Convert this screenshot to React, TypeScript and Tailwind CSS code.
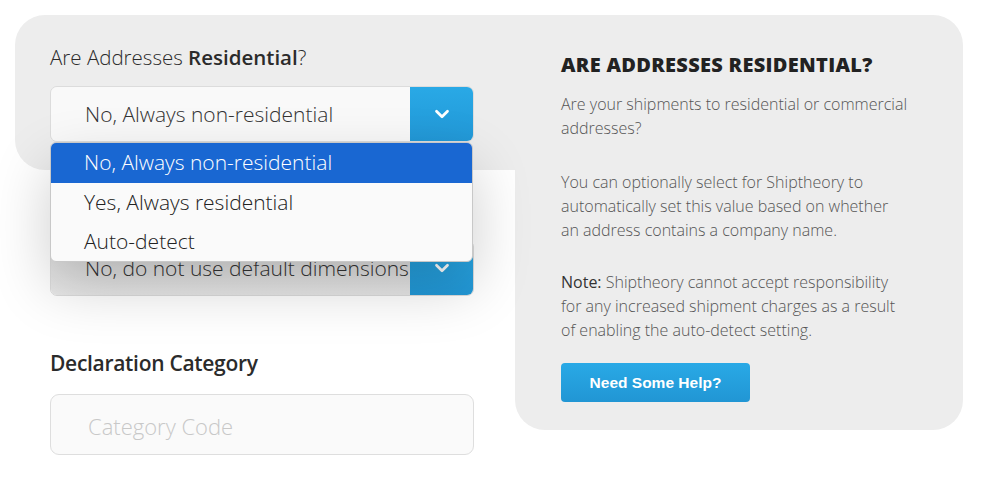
import { ChevronDown } from "lucide-react";

const light = "font-['Open_Sans',sans-serif] font-light";

function SelectBox({ value, dim }: { value: string; dim?: boolean }) {
  return (
    <div className="flex h-[56px] w-[424px] overflow-hidden rounded-[7px] border border-[#dcdcdc]">
      <div
        className={`flex flex-1 items-center whitespace-nowrap pl-[34px] pt-[2px] text-[21px] text-[#333] ${light} ${dim ? "bg-gradient-to-b from-[#dcdcdc] to-[#e8e8e8]" : "bg-[#f9f9f9]"}`}
      >
        {value}
      </div>
      <div className="flex w-[63px] shrink-0 items-center justify-center bg-gradient-to-b from-[#29a9e6] to-[#2298d7]">
        <ChevronDown className="h-[22px] w-[22px] text-white" strokeWidth={3} />
      </div>
    </div>
  );
}

function Dropdown() {
  const opts = ["No, Always non-residential", "Yes, Always residential", "Auto-detect"];
  return (
    <div className="absolute left-0 top-full z-10 w-[423px] overflow-hidden rounded-[6px] border border-[#c8c8c8] bg-[#fafafa] shadow-[0_24px_60px_rgba(0,0,0,0.2)]">
      {opts.map((o, i) => (
        <div
          key={o}
          className={`flex items-center pl-[33px] text-[21px] ${light} ${i === 0 ? "h-[40px] bg-[#1967d2] text-white" : "h-[39px] text-[#222]"}`}
        >
          {o}
        </div>
      ))}
    </div>
  );
}

export default function App() {
  return (
    <div className="h-[477px] w-[982px] overflow-hidden bg-white pl-[15px] pt-[15px]">
      <div className="flex items-start">
        <div className="w-[500px]">
          <div className="h-[155px] rounded-l-[30px] bg-[#ededed] pl-[35px] pt-[27px]">
            <div className="h-[44px] text-[20.5px] text-[#2b2b2b] font-['Open_Sans',sans-serif] font-light">
              Are Addresses <span className="font-semibold">Residential</span>?
            </div>
            <div className="relative">
              <SelectBox value="No, Always non-residential" />
              <Dropdown />
            </div>
          </div>
          <div className="pl-[35px]">
            {/* label of this row sits under the open dropdown */}
            <div className="h-[70px]" />
            <SelectBox value="No, do not use default dimensions" dim />
            <div className="pt-[52px] text-[21px] font-semibold tracking-[-0.3px] text-[#2b2b2b] font-['Open_Sans',sans-serif]">
              Declaration Category
            </div>
            <div
              className={`mt-[14px] flex h-[61px] w-[424px] items-center rounded-[9px] border border-[#dedede] bg-[#fafafa] pl-[37px] pt-[4px] text-[22px] text-[#c8c8c8] ${light}`}
            >
              Category Code
            </div>
          </div>
        </div>
        <div className="h-[415px] w-[448px] rounded-tr-[30px] rounded-b-[30px] bg-[#ededed] pl-[46px] pr-[30px] pt-[35px]">
          <h2 className="text-[20px] font-extrabold tracking-[0.3px] text-[#222] font-['Open_Sans',sans-serif]">
            ARE ADDRESSES RESIDENTIAL?
          </h2>
          <div className={`mt-[12px] whitespace-nowrap text-[16px] leading-[24px] text-[#555] ${light}`}>
            <p>
              Are your shipments to residential or commercial
              <br />
              addresses?
            </p>
            <p className="mt-[30px]">
              You can optionally select for Shiptheory to
              <br />
              automatically set this value based on whether
              <br />
              an address contains a company name.
            </p>
            <p className="mt-[28px]">
              <span className="font-normal text-[#333]">Note:</span> Shiptheory cannot accept responsibility
              <br />
              for any increased shipment charges as a result
              <br />
              of enabling the auto-detect setting.
            </p>
          </div>
          <button className="mt-[21px] flex h-[39px] w-[189px] items-center justify-center rounded-[4px] bg-gradient-to-b from-[#29a9e6] to-[#2196d4] text-[15.5px] font-bold text-white font-['Liberation_Sans',Arial,sans-serif]">
            Need Some Help?
          </button>
        </div>
      </div>
    </div>
  );
}
